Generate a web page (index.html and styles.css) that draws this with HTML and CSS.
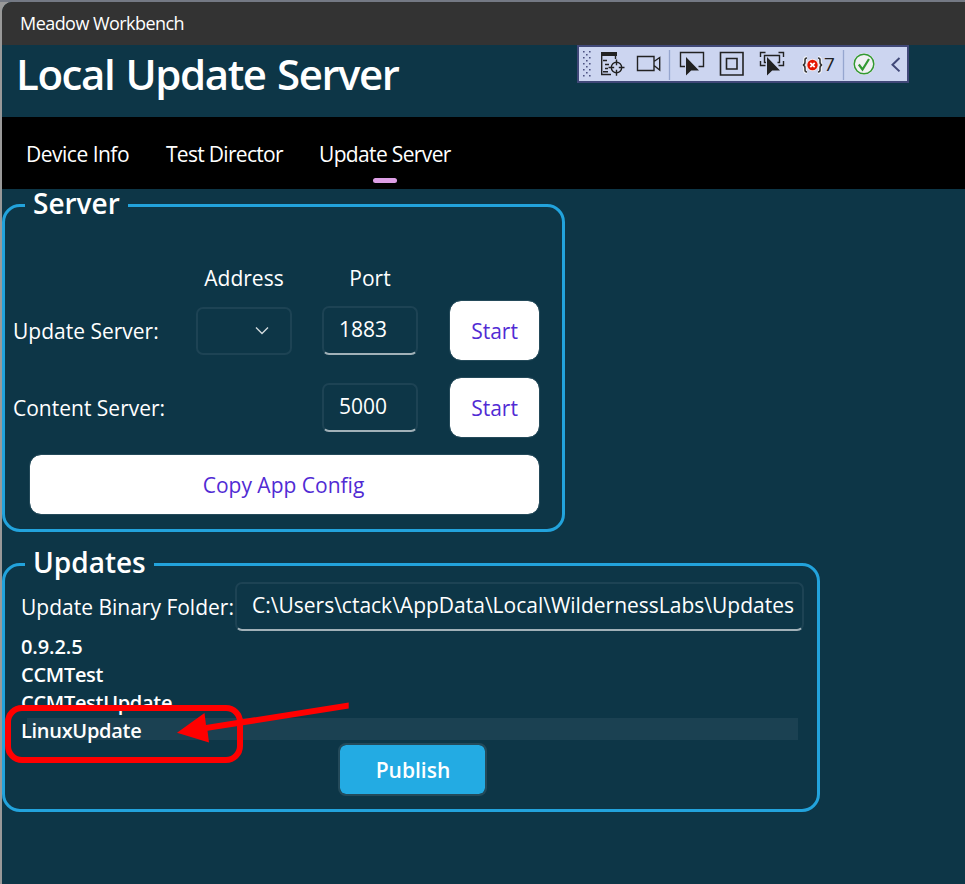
FILE: index.html
```
<!DOCTYPE html>
<html lang="en">
<head>
<meta charset="utf-8">
<title>Meadow Workbench</title>
<link rel="stylesheet" href="styles.css">
</head>
<body>
<div class="window">
  <div class="titlebar"><span>Meadow Workbench</span></div>
  <header class="header"><h1>Local Update Server</h1></header>
  <nav class="tabs">
    <a class="tab tab-device">Device Info</a>
    <a class="tab tab-test">Test Director</a>
    <a class="tab tab-update active">Update Server</a>
  </nav>
  <main>
    <section class="group server">
      <h2 class="legend">Server</h2>
      <div class="server-grid">
        <span class="head address">Address</span>
        <span class="head port">Port</span>
        <span class="label">Update Server:</span>
        <div class="select"><svg width="16" height="12" viewBox="0 0 16 12"><path d="M2 2.5 8 8.5 14 2.5" fill="none" stroke="#d2dadd" stroke-width="1.4"/></svg></div>
        <div class="field port">1883</div>
        <button class="button start">Start</button>
        <span class="label">Content Server:</span>
        <div class="field port">5000</div>
        <button class="button start">Start</button>
        <button class="button copy">Copy App Config</button>
      </div>
    </section>
    <section class="group updates">
      <h2 class="legend">Updates</h2>
      <div class="folder">
        <span class="label">Update Binary Folder:</span>
        <div class="field">C:\Users\ctack\AppData\Local\WildernessLabs\Updates</div>
      </div>
      <ul class="list">
        <li><span class="version">0.9.2.5</span></li>
        <li><span class="ccm">CCMTest</span></li>
        <li><span class="ccmu">CCMTestUpdate</span></li>
        <li class="selected"><span class="linux">LinuxUpdate</span></li>
      </ul>
      <button class="publish">Publish</button>
    </section>
  </main>
</div>

<div class="toolbar">
  <svg width="331" height="37" viewBox="0 0 331 37" fill="none">
    <g fill="#4c5282">
      <path d="M6 5h1.6v1.6H6zm6 0h1.6v1.6H12zM9 8h1.6v1.6H9zM6 11h1.6v1.6H6zm6 0h1.6v1.6H12zM9 14h1.6v1.6H9zM6 17h1.6v1.6H6zm6 0h1.6v1.6H12zM9 20h1.6v1.6H9zM6 23h1.6v1.6H6zm6 0h1.6v1.6H12zM9 26h1.6v1.6H9zM6 29h1.6v1.6H6zm6 0h1.6v1.6H12z"/>
    </g>
    <path d="M92.5 4v30M266.500 4v30" stroke="#96a6cf" stroke-width="1.3"/>
    <g stroke="#222" stroke-width="1.4">
      <path d="M24.700 10v18.500H34M38.500 10v3M26 14.500h4M28 18.500h4M28 22.500h3M26 25.700h5"/>
      <path d="M24 6h16v4H24z" fill="#222" stroke="none"/>
      <circle cx="39.500" cy="21.500" r="5.200"/>
      <path d="M39.500 13.500v5.700M39.500 23.800v6M31.500 21.500h5.700M41.800 21.500h5.700"/>
      <path d="M60.500 10.500h16.500v14H60.500zM77 15.500l5.700-4v12.500L77 19.500" fill="none"/>
      <path d="M108 20.500h-4.500V6.500h23v14h-5"/>
      <path d="M143.500 6.500h22.500v22.500h-22.500zM149.500 12.500h10.500v10.500h-10.500z" stroke-width="1.600"/>
      <path d="M183.500 11V6.500h5M201.500 6.500h5v4.500M206.500 15v4.500h-5M183.500 15v4.500h5M189 16.500H187.500V9.500h15v7h-2"/>
    </g>
    <path d="M109 11v18.500l5.200-5h7.800zM190 11v18.500l5.200-5h7.800z" fill="#222"/>
    <path d="M230 12q-2 0-2 2v2q0 2.500-2 3 2 .5 2 3v2q0 2 2 2M241 12q2 0 2 2v2q0 2.500 2 3-2 .5-2 3v2q0 2-2 2" stroke="#eef0f7" stroke-width="4"/>
    <path d="M230 12q-2 0-2 2v2q0 2.500-2 3 2 .5 2 3v2q0 2 2 2M241 12q2 0 2 2v2q0 2.500 2 3-2 .5-2 3v2q0 2-2 2" stroke="#333" stroke-width="1.500"/>
    <circle cx="235.500" cy="19" r="6.200" fill="#f5e9eb"/><circle cx="235.500" cy="19" r="5.200" fill="#e51400"/>
    <path d="m233.300 16.800 4.400 4.400m0-4.400-4.400 4.400" stroke="#fff" stroke-width="1.700"/>
    <circle cx="287" cy="18" r="10.800" fill="#f0f0f3"/>
    <circle cx="287" cy="18" r="9.800" stroke="#329932" stroke-width="1.500"/>
    <path d="m281.800 18.500 3.700 5 6.500-10.500" stroke="#329932" stroke-width="2.200"/>
    <path d="m322.500 12-7 6.700 7 6.700" stroke="#404878" stroke-width="2"/>
  </svg>
  <span class="count">7</span>
</div>

<svg class="annotation" width="360" height="70" viewBox="0 0 360 70">
  <rect x="8" y="8" width="232" height="52" rx="14" fill="none" stroke="#f00" stroke-width="6"/>
  <path d="M348.700 2.500v6L207.500 30.800l1.500 11.700L177 32.700 204.500 13l1.500 12z" fill="#f00"/>
</svg>
</body>
</html>
```
FILE: styles.css
```
* { box-sizing: border-box; }
html, body { height: 100%; margin: 0; overflow: hidden; }
body { background: linear-gradient(#747984 0 2px, #999 2px); color: #fff; font: 21px/28px "Open Sans", sans-serif; }
h1, h2, ul { margin: 0; padding: 0; }
button { font: inherit; padding: 0; }
span { white-space: nowrap; }
.window { height: 882px; margin: 2px 0 0 2px; background: #0d3647; border-top-left-radius: 10px; overflow: hidden; }
.titlebar { height: 43px; padding: 8px 0 0 18px; background: #333; font: 18px/26px "Open Sans", sans-serif; letter-spacing: -.55px; }
.header { height: 72px; padding: 2px 0 0 14px; }
h1 { font-size: 42px; line-height: 54px; font-weight: 600; letter-spacing: -1.45px; word-spacing: 2px; white-space: nowrap; }
.tabs { display: flex; height: 72px; background: #000; padding: 23px 0 0 24px; }
.tab { width: 104px; margin-right: 36px; letter-spacing: -.5px; white-space: nowrap; }
.tab-test { width: 117px; letter-spacing: -.7px; }
.tab-update { width: 132px; margin: 0; letter-spacing: -.65px; }
.active::after { content: ""; display: block; width: 24px; height: 5px; border-radius: 3px; margin: 10px auto 0; background: #dd9fe5; }
.group { border: 3px solid #22a3dc; border-radius: 18px; }
.server { width: 563px; height: 328px; margin-top: 15px; }
.updates { width: 818px; height: 249px; margin-top: 31px; }
.legend { width: 103px; height: 28px; margin: -18px 0 0 20px; padding-left: 8px; background: #0d3647; font-size: 28px; line-height: 29px; font-weight: 600; white-space: nowrap; }
.updates .legend { width: 129px; }
.server-grid { display: grid; grid-template-columns: 183px 96px 30px 96px 31px 91px; grid-template-rows: 28px 61px 61px 61px; row-gap: 16px; padding: 47px 0 0 8px; align-items: center; }
.server-grid .head { text-align: center; }
.server-grid .label, .server-grid .select, .server-grid .field, .server-grid .button { margin-top: -16px; }
.address { grid-column: 2; }
.port { grid-column: 4; }
.label { grid-column: 1; }
.start { grid-column: 6; }
.copy { grid-column: 1 / 7; margin-left: 16px; padding-right: 2px; }
.select { display: flex; align-items: center; justify-content: flex-end; height: 48px; padding-right: 20px; border: 2px solid #1d4354; border-radius: 7px; }
.field { height: 49px; padding: 7px 14px 0 15px; border: 2px solid #1d4354; border-bottom-color: #a1b1b8; border-radius: 7px; white-space: nowrap; }
.button { height: 61px; border: 1px solid #244a5a; background: #fff; background-clip: padding-box; color: #512bd4; border-radius: 12px; }
.folder { display: flex; padding: 6px 0 0 16px; align-items: center; }
.folder .label { width: 214px; }
.folder .field { width: 569px; }
.list { list-style: none; height: 112px; margin-top: 2px; font-weight: 600; }
li { height: 28px; padding-left: 16px; font-size: 20px; line-height: 28px; letter-spacing: -.3px; }
.version { letter-spacing: -.1px; }
.selected { background: linear-gradient(#1b4152, #1b4152) 22px 1px / 771px 22px no-repeat; }
.publish { display: block; width: 149px; height: 53px; margin: -2px 0 0 333px; padding: 1px 0 0 1px; background: #23abe3; background-clip: padding-box; border: 2px solid #244a5a; border-radius: 8px; color: #fff; font-weight: 600; }
.toolbar { position: absolute; left: 577px; top: 45px; width: 332px; height: 38px; background: #ccd5f0; border: 2px solid #404878; }
.toolbar svg { display: block; margin: -1px -2px -2px; }
.count { position: absolute; left: 245px; top: 3px; color: #222; font: 19px/28px "Open Sans", sans-serif; }
.annotation { position: absolute; left: 0; top: 700px; }
```
